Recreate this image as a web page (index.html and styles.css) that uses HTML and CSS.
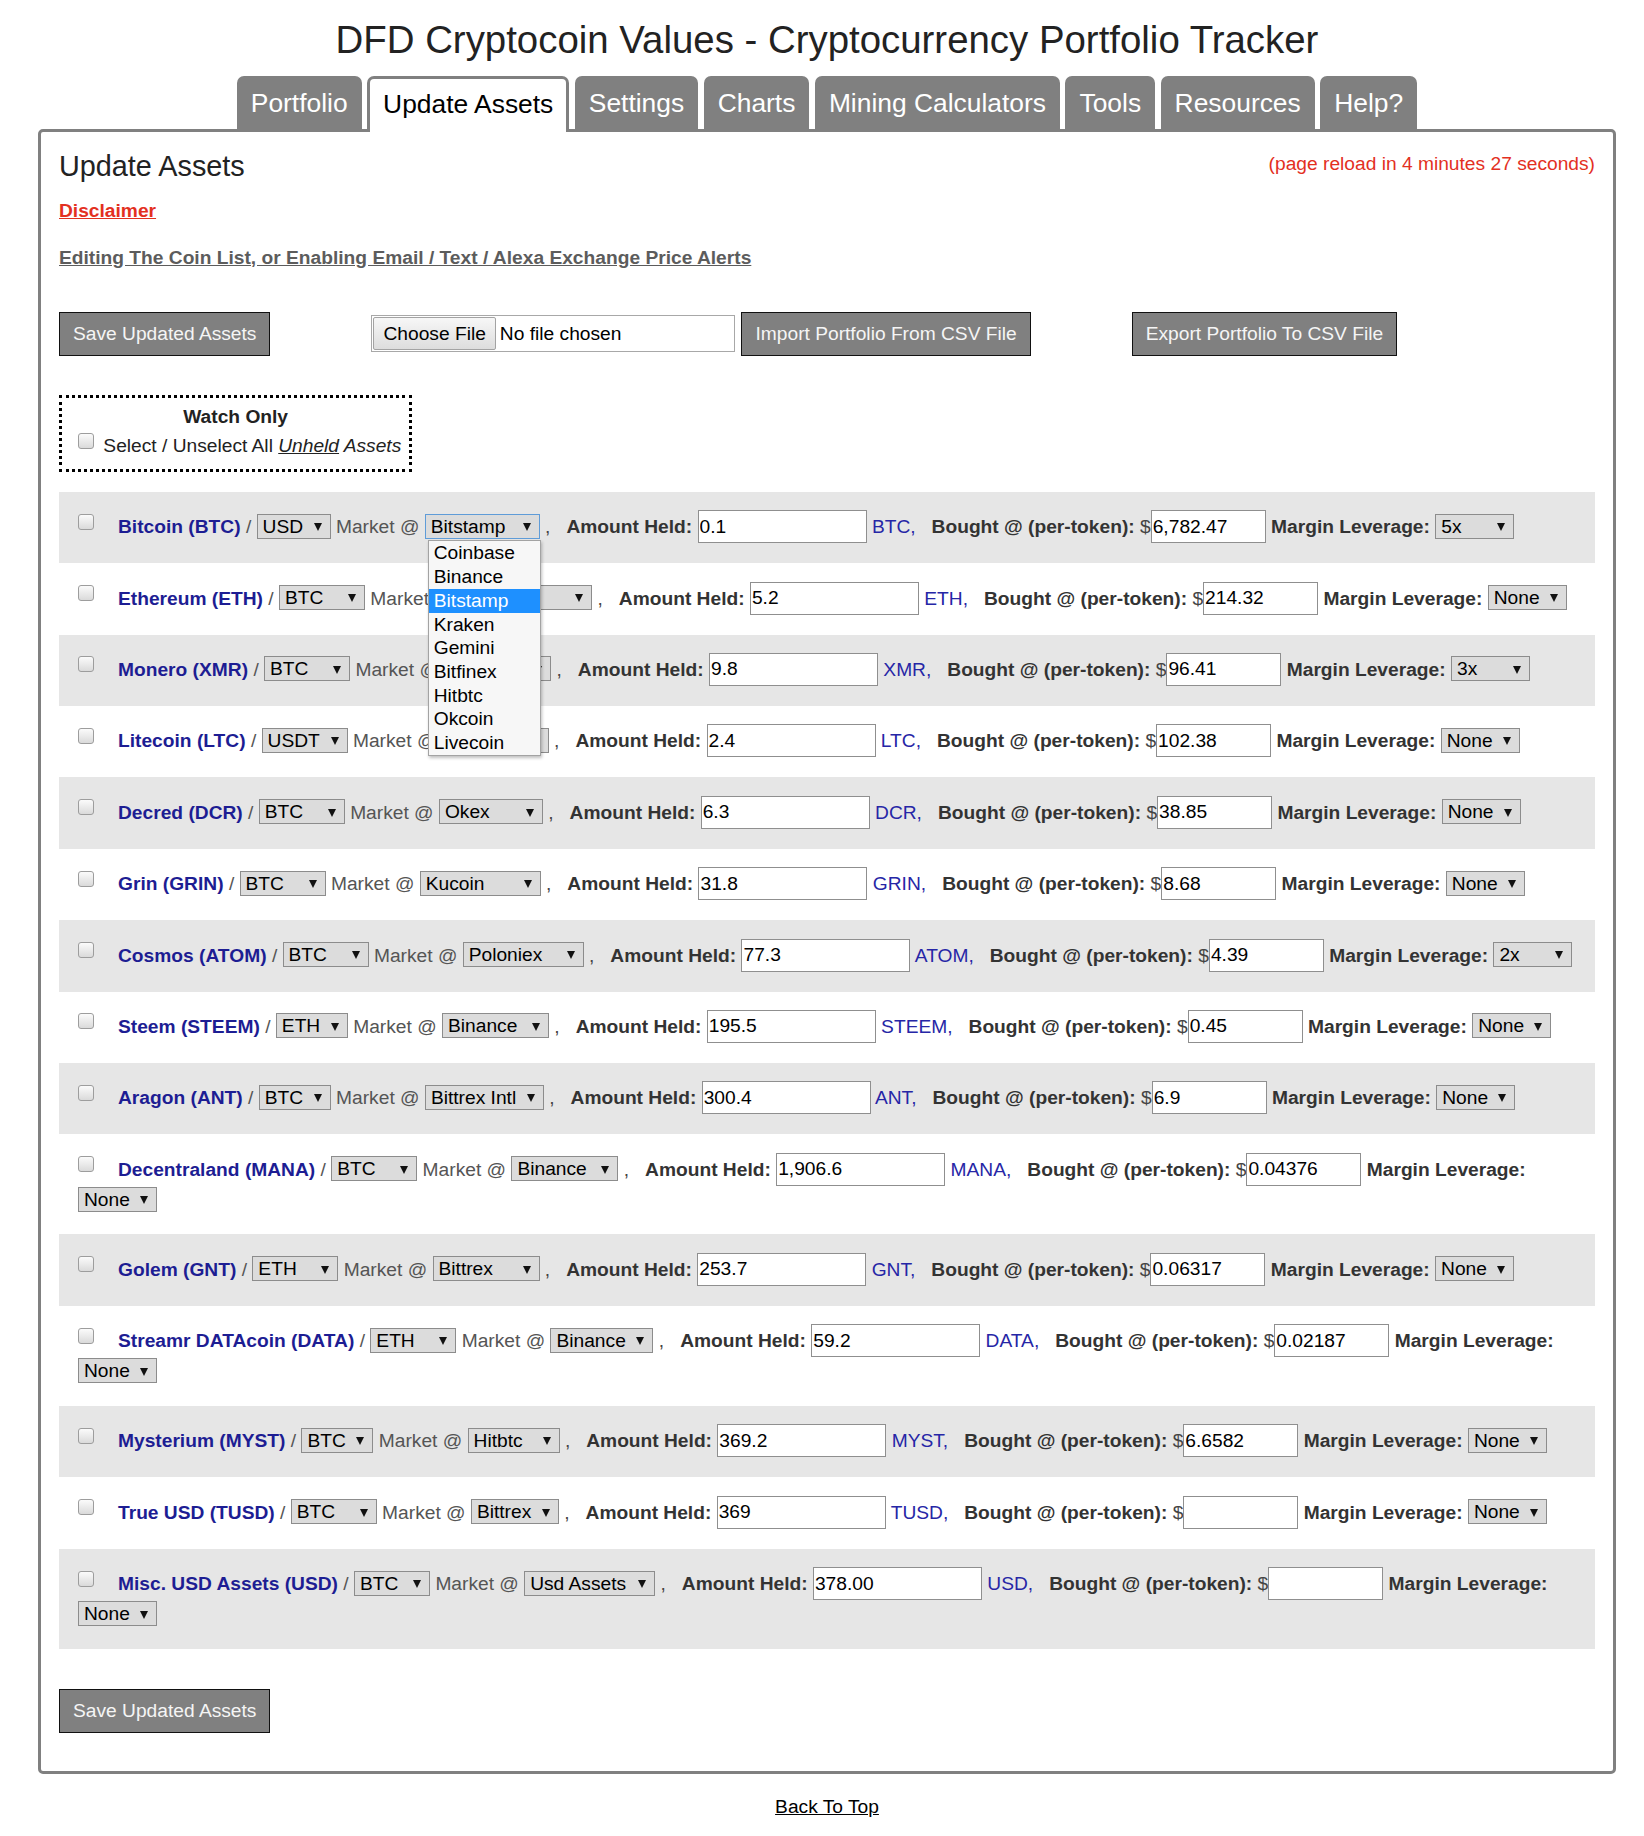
FILE: index.html
```html
<!DOCTYPE html>
<html lang="en">
<head>
<meta charset="utf-8">
<title>DFD Cryptocoin Values - Update Assets</title>
<link rel="stylesheet" href="styles.css">
</head>
<body>
<div class="wrap">
  <h1 class="title">DFD Cryptocoin Values - Cryptocurrency Portfolio Tracker</h1>
  <nav class="tabs">
    <a class="tab" href="#">Portfolio</a>
    <a class="tab active" href="#">Update Assets</a>
    <a class="tab" href="#">Settings</a>
    <a class="tab" href="#">Charts</a>
    <a class="tab" href="#">Mining Calculators</a>
    <a class="tab" href="#">Tools</a>
    <a class="tab" href="#">Resources</a>
    <a class="tab" href="#">Help?</a>
  </nav>
  <div class="box">
    <div class="head">
      <h2 class="h2">Update Assets</h2>
      <span class="reload">(page reload in 4 minutes 27 seconds)</span>
    </div>
    <div class="disc"><a class="red-link" href="#">Disclaimer</a></div>
    <div class="edit"><a class="gray-link" href="#">Editing The Coin List, or Enabling Email / Text / Alexa Exchange Price Alerts</a></div>

    <div class="actions">
      <button class="btn" type="button">Save Updated Assets</button>
      <label class="file"><span class="file-btn">Choose File</span><span class="file-name">No file chosen</span></label>
      <button class="btn" type="button">Import Portfolio From CSV File</button>
      <button class="btn export" type="button">Export Portfolio To CSV File</button>
    </div>

    <div class="watch">
      <div class="watch-title">Watch Only</div>
      <div><input type="checkbox" class="cb cb-watch"> Select / Unselect All <i><u>Unheld</u> Assets</i></div>
    </div>

    <div class="rows">
      <div class="row"><input type="checkbox" class="cb"><a class="coin" href="#">Bitcoin (BTC)</a> <span class="muted">/</span> <span class="sel"><select><option selected>USD</option><option>EUR</option><option>GBP</option></select></span> <span class="muted">Market @</span> <span class="sel focus"><select><option>Coinbase</option><option>Binance</option><option selected>Bitstamp</option><option>Kraken</option><option>Gemini</option><option>Bitfinex</option><option>Hitbtc</option><option>Okcoin</option><option>Livecoin</option></select><span class="dd"><span class="dd-item">Coinbase</span><span class="dd-item">Binance</span><span class="dd-item on">Bitstamp</span><span class="dd-item">Kraken</span><span class="dd-item">Gemini</span><span class="dd-item">Bitfinex</span><span class="dd-item">Hitbtc</span><span class="dd-item">Okcoin</span><span class="dd-item">Livecoin</span></span></span> , &nbsp; <b>Amount Held:</b> <input type="text" class="amt" value="0.1"> <span class="unit">BTC,</span> &nbsp; <b>Bought @ (per-token):</b> $<input type="text" class="buy" value="6,782.47"> <b>Margin Leverage:</b> <span class="sel"><select><option>None</option><option>2x</option><option>3x</option><option>4x</option><option selected>5x</option></select></span></div>

      <div class="row"><input type="checkbox" class="cb"><a class="coin" href="#">Ethereum (ETH)</a> <span class="muted">/</span> <span class="sel"><select><option selected>BTC</option><option>USDT</option><option>USD</option></select></span> <span class="muted">Market @</span> <span class="sel"><select><option selected>Binance</option><option>Bitfinex</option><option>Bittrex</option><option>Cryptofresh</option><option>Kraken</option></select></span> , &nbsp; <b>Amount Held:</b> <input type="text" class="amt" value="5.2"> <span class="unit">ETH,</span> &nbsp; <b>Bought @ (per-token):</b> $<input type="text" class="buy" value="214.32"> <b>Margin Leverage:</b> <span class="sel"><select><option selected>None</option><option>2x</option><option>3x</option><option>4x</option><option>5x</option></select></span></div>

      <div class="row"><input type="checkbox" class="cb"><a class="coin" href="#">Monero (XMR)</a> <span class="muted">/</span> <span class="sel"><select><option selected>BTC</option><option>USDT</option></select></span> <span class="muted">Market @</span> <span class="sel"><select><option selected>Binance</option><option>Bittrex</option><option>Hitbtc</option><option>Kraken</option><option>Poloniex</option></select></span> , &nbsp; <b>Amount Held:</b> <input type="text" class="amt" value="9.8"> <span class="unit">XMR,</span> &nbsp; <b>Bought @ (per-token):</b> $<input type="text" class="buy" value="96.41"> <b>Margin Leverage:</b> <span class="sel"><select><option>None</option><option>2x</option><option selected>3x</option><option>4x</option><option>5x</option></select></span></div>

      <div class="row"><input type="checkbox" class="cb"><a class="coin" href="#">Litecoin (LTC)</a> <span class="muted">/</span> <span class="sel"><select><option>BTC</option><option selected>USDT</option></select></span> <span class="muted">Market @</span> <span class="sel"><select><option selected>Binance</option><option>Bittrex</option><option>Poloniex</option></select></span> , &nbsp; <b>Amount Held:</b> <input type="text" class="amt" value="2.4"> <span class="unit">LTC,</span> &nbsp; <b>Bought @ (per-token):</b> $<input type="text" class="buy" value="102.38"> <b>Margin Leverage:</b> <span class="sel"><select><option selected>None</option><option>2x</option><option>3x</option><option>4x</option><option>5x</option></select></span></div>

      <div class="row"><input type="checkbox" class="cb"><a class="coin" href="#">Decred (DCR)</a> <span class="muted">/</span> <span class="sel"><select><option selected>BTC</option><option>USDT</option></select></span> <span class="muted">Market @</span> <span class="sel"><select><option>Binance</option><option>Bittrex</option><option selected>Okex</option><option>Livecoin</option></select></span> , &nbsp; <b>Amount Held:</b> <input type="text" class="amt" value="6.3"> <span class="unit">DCR,</span> &nbsp; <b>Bought @ (per-token):</b> $<input type="text" class="buy" value="38.85"> <b>Margin Leverage:</b> <span class="sel"><select><option selected>None</option><option>2x</option><option>3x</option><option>4x</option><option>5x</option></select></span></div>

      <div class="row"><input type="checkbox" class="cb"><a class="coin" href="#">Grin (GRIN)</a> <span class="muted">/</span> <span class="sel"><select><option selected>BTC</option><option>USDT</option></select></span> <span class="muted">Market @</span> <span class="sel"><select><option>Bitforex</option><option>Hotbit</option><option selected>Kucoin</option><option>Tradeogre</option></select></span> , &nbsp; <b>Amount Held:</b> <input type="text" class="amt" value="31.8"> <span class="unit">GRIN,</span> &nbsp; <b>Bought @ (per-token):</b> $<input type="text" class="buy" value="8.68"> <b>Margin Leverage:</b> <span class="sel"><select><option selected>None</option><option>2x</option><option>3x</option><option>4x</option><option>5x</option></select></span></div>

      <div class="row"><input type="checkbox" class="cb"><a class="coin" href="#">Cosmos (ATOM)</a> <span class="muted">/</span> <span class="sel"><select><option selected>BTC</option><option>USDT</option></select></span> <span class="muted">Market @</span> <span class="sel"><select><option>Binance</option><option>Kraken</option><option selected>Poloniex</option><option>Tradeogre</option></select></span> , &nbsp; <b>Amount Held:</b> <input type="text" class="amt" value="77.3"> <span class="unit">ATOM,</span> &nbsp; <b>Bought @ (per-token):</b> $<input type="text" class="buy" value="4.39"> <b>Margin Leverage:</b> <span class="sel"><select><option>None</option><option selected>2x</option><option>3x</option><option>4x</option><option>5x</option></select></span></div>

      <div class="row"><input type="checkbox" class="cb"><a class="coin" href="#">Steem (STEEM)</a> <span class="muted">/</span> <span class="sel"><select><option>BTC</option><option selected>ETH</option></select></span> <span class="muted">Market @</span> <span class="sel"><select><option selected>Binance</option><option>Bittrex</option><option>Huobi</option><option>Poloniex</option></select></span> , &nbsp; <b>Amount Held:</b> <input type="text" class="amt" value="195.5"> <span class="unit">STEEM,</span> &nbsp; <b>Bought @ (per-token):</b> $<input type="text" class="buy" value="0.45"> <b>Margin Leverage:</b> <span class="sel"><select><option selected>None</option><option>2x</option><option>3x</option><option>4x</option><option>5x</option></select></span></div>

      <div class="row"><input type="checkbox" class="cb"><a class="coin" href="#">Aragon (ANT)</a> <span class="muted">/</span> <span class="sel"><select><option selected>BTC</option><option>ETH</option></select></span> <span class="muted">Market @</span> <span class="sel"><select><option>Bittrex</option><option selected>Bittrex Intl</option><option>Ethfinex</option></select></span> , &nbsp; <b>Amount Held:</b> <input type="text" class="amt" value="300.4"> <span class="unit">ANT,</span> &nbsp; <b>Bought @ (per-token):</b> $<input type="text" class="buy" value="6.9"> <b>Margin Leverage:</b> <span class="sel"><select><option selected>None</option><option>2x</option><option>3x</option><option>4x</option><option>5x</option></select></span></div>

      <div class="row"><input type="checkbox" class="cb"><a class="coin" href="#">Decentraland (MANA)</a> <span class="muted">/</span> <span class="sel"><select><option selected>BTC</option><option>ETH</option><option>USDT</option></select></span> <span class="muted">Market @</span> <span class="sel"><select><option selected>Binance</option><option>Bittrex</option><option>Poloniex</option></select></span> , &nbsp; <b>Amount Held:</b> <input type="text" class="amt" value="1,906.6"> <span class="unit">MANA,</span> &nbsp; <b>Bought @ (per-token):</b> $<input type="text" class="buy" value="0.04376"> <b>Margin Leverage:</b> <span class="sel"><select><option selected>None</option><option>2x</option><option>3x</option><option>4x</option><option>5x</option></select></span></div>

      <div class="row"><input type="checkbox" class="cb"><a class="coin" href="#">Golem (GNT)</a> <span class="muted">/</span> <span class="sel"><select><option>BTC</option><option selected>ETH</option><option>USDT</option></select></span> <span class="muted">Market @</span> <span class="sel"><select><option>Binance</option><option selected>Bittrex</option><option>Ethfinex</option><option>Poloniex</option></select></span> , &nbsp; <b>Amount Held:</b> <input type="text" class="amt" value="253.7"> <span class="unit">GNT,</span> &nbsp; <b>Bought @ (per-token):</b> $<input type="text" class="buy" value="0.06317"> <b>Margin Leverage:</b> <span class="sel"><select><option selected>None</option><option>2x</option><option>3x</option><option>4x</option><option>5x</option></select></span></div>

      <div class="row"><input type="checkbox" class="cb"><a class="coin" href="#">Streamr DATAcoin (DATA)</a> <span class="muted">/</span> <span class="sel"><select><option>BTC</option><option selected>ETH</option><option>USDT</option></select></span> <span class="muted">Market @</span> <span class="sel"><select><option selected>Binance</option><option>Ethfinex</option></select></span> , &nbsp; <b>Amount Held:</b> <input type="text" class="amt" value="59.2"> <span class="unit">DATA,</span> &nbsp; <b>Bought @ (per-token):</b> $<input type="text" class="buy" value="0.02187"> <b>Margin Leverage:</b> <span class="sel"><select><option selected>None</option><option>2x</option><option>3x</option><option>4x</option><option>5x</option></select></span></div>

      <div class="row"><input type="checkbox" class="cb"><a class="coin" href="#">Mysterium (MYST)</a> <span class="muted">/</span> <span class="sel"><select><option selected>BTC</option><option>ETH</option></select></span> <span class="muted">Market @</span> <span class="sel"><select><option selected>Hitbtc</option><option>Kucoin</option><option>Idex</option></select></span> , &nbsp; <b>Amount Held:</b> <input type="text" class="amt" value="369.2"> <span class="unit">MYST,</span> &nbsp; <b>Bought @ (per-token):</b> $<input type="text" class="buy" value="6.6582"> <b>Margin Leverage:</b> <span class="sel"><select><option selected>None</option><option>2x</option><option>3x</option><option>4x</option><option>5x</option></select></span></div>

      <div class="row"><input type="checkbox" class="cb"><a class="coin" href="#">True USD (TUSD)</a> <span class="muted">/</span> <span class="sel"><select><option selected>BTC</option><option>USDT</option></select></span> <span class="muted">Market @</span> <span class="sel"><select><option selected>Bittrex</option><option>Hitbtc</option><option>Upbit</option></select></span> , &nbsp; <b>Amount Held:</b> <input type="text" class="amt" value="369"> <span class="unit">TUSD,</span> &nbsp; <b>Bought @ (per-token):</b> $<input type="text" class="buy" value=""> <b>Margin Leverage:</b> <span class="sel"><select><option selected>None</option><option>2x</option><option>3x</option><option>4x</option><option>5x</option></select></span></div>

      <div class="row"><input type="checkbox" class="cb"><a class="coin" href="#">Misc. USD Assets (USD)</a> <span class="muted">/</span> <span class="sel"><select><option selected>BTC</option><option>XMR</option></select></span> <span class="muted">Market @</span> <span class="sel"><select><option selected>Usd Assets</option></select></span> , &nbsp; <b>Amount Held:</b> <input type="text" class="amt" value="378.00"> <span class="unit">USD,</span> &nbsp; <b>Bought @ (per-token):</b> $<input type="text" class="buy" value=""> <b>Margin Leverage:</b> <span class="sel"><select><option selected>None</option><option>2x</option><option>3x</option><option>4x</option><option>5x</option></select></span></div>
    </div>

    <div class="bottom-actions">
      <button class="btn" type="button">Save Updated Assets</button>
    </div>
  </div>
  <div class="back"><a class="back-link" href="#">Back To Top</a></div>
</div>
</body>
</html>
```

FILE: styles.css
```css
* { box-sizing: border-box; }

html, body {
  margin: 0;
  padding: 0;
  background: #ffffff;
}

body {
  font-family: "Liberation Sans", Arial, sans-serif;
  font-size: 19.2px;
  line-height: 1.5;
  color: #222222;
}

.wrap {
  width: 1578px;
  margin-left: 38px;
}

.title {
  margin: 18px 0 0;
  font-size: 38.4px;
  line-height: 44px;
  font-weight: normal;
  text-align: center;
  color: #222222;
}

.tabs {
  display: flex;
  justify-content: center;
  align-items: flex-start;
  gap: 5.5px;
  margin: 14px 0 -3px;
}

.tab {
  font-size: 26.4px;
  line-height: 30px;
  padding: 12px 14px 11px;
  background: #808080;
  color: #ffffff;
  border-radius: 7px 7px 0 0;
  text-decoration: none;
}

.tab.active {
  background: #ffffff;
  color: #000000;
  border: 3px solid #808080;
  border-bottom: 0;
  padding: 10px 13px 13px;
  position: relative;
  z-index: 1;
}

.box {
  border: 3px solid #808080;
  border-radius: 5px;
  padding: 13px 18px 38px;
}

.head {
  display: flex;
  justify-content: space-between;
  align-items: flex-start;
}

.h2 {
  margin: 0;
  font-size: 28.8px;
  line-height: 43.2px;
  font-weight: normal;
  color: #222222;
}

.reload {
  color: #e3301f;
  margin-top: 4.6px;
}

.disc { margin-top: 9px; }
.edit { margin-top: 18px; }

.red-link {
  color: #e3301f;
  font-weight: bold;
}

.gray-link {
  color: #5c5c5c;
  font-weight: bold;
}

.actions {
  display: flex;
  align-items: center;
  margin-top: 39px;
}

.btn {
  font-family: inherit;
  font-size: 19.2px;
  line-height: 22px;
  padding: 10px 13px;
  margin: 0;
  background: #808080;
  color: #f5f5f5;
  border: 1px solid #111111;
  border-radius: 0;
}

.file {
  display: flex;
  align-items: center;
  width: 364px;
  height: 37px;
  border: 1px solid #a8a8a8;
  padding: 1px;
  margin-left: 101px;
  margin-right: 6px;
  color: #000000;
  line-height: 22px;
}

.file-btn {
  height: 33px;
  line-height: 31px;
  padding: 0 9px;
  border: 1px solid #a3a3a3;
  border-radius: 2px;
  background: linear-gradient(#f7f7f7, #dddddd);
  color: #000000;
}

.file-name {
  margin-left: 4px;
}

.export { margin-left: 101px; }

.watch {
  width: fit-content;
  border: 3px dotted #000000;
  padding: 5px 8px 9px 16px;
  margin-top: 39px;
  color: #222222;
}

.watch-title {
  text-align: center;
  font-weight: bold;
  padding-right: 8px;
}

.cb {
  appearance: none;
  -webkit-appearance: none;
  width: 16px;
  height: 16px;
  margin: 0 24px 3px 0;
  border: 1px solid #9d9d9d;
  border-radius: 3px;
  background: linear-gradient(#fbfbfb, #dadada);
  vertical-align: baseline;
}

.cb-watch { margin-right: 4px; }

.rows { margin-top: 19.4px; }

.row {
  padding: 18.4px 0 20px 19px;
  color: #444444;
}

.row:nth-child(odd) { background: #e6e6e6; }

.row b { color: #333333; }

.coin {
  color: #1d1d93;
  font-weight: bold;
  text-decoration: none;
}

.muted { color: #555555; }

.unit { color: #2626a6; }

.sel {
  display: inline-block;
  position: relative;
}

.sel select {
  appearance: none;
  -webkit-appearance: none;
  font-family: inherit;
  font-size: 19.2px;
  height: 25px;
  margin: 0;
  padding: 0 26px 0 5px;
  border: 1px solid #8c8c8c;
  border-radius: 0;
  background: #dcdcdc;
  color: #000000;
}

.sel.focus select {
  border-color: #5f9cd8;
}

.sel::after {
  content: "";
  position: absolute;
  right: 9px;
  top: 50%;
  margin-top: -4px;
  border-left: 4px solid transparent;
  border-right: 4px solid transparent;
  border-top: 8px solid #111111;
  pointer-events: none;
}

.amt, .buy {
  font-family: inherit;
  font-size: 19.2px;
  height: 33px;
  margin: 0;
  padding: 0 1px;
  border: 1px solid #8f8f8f;
  border-radius: 0;
  background: #ffffff;
  color: #000000;
}

.amt { width: 169px; }
.buy { width: 115px; }

.dd {
  position: absolute;
  left: 3px;
  top: calc(100% - 1px);
  width: 113px;
  display: block;
  background: #f7f7f7;
  border: 1px solid #a3a3a3;
  box-shadow: 1px 2px 3px rgba(0, 0, 0, 0.25);
  z-index: 10;
  line-height: 23.7px;
}

.dd-item {
  display: block;
  padding-left: 5px;
  color: #000000;
  white-space: nowrap;
}

.dd-item.on {
  background: #1e90ff;
  color: #ffffff;
}

.bottom-actions { margin-top: 40px; }

.back {
  text-align: center;
  margin-top: 18.6px;
}

.back-link { color: #000000; }
```
